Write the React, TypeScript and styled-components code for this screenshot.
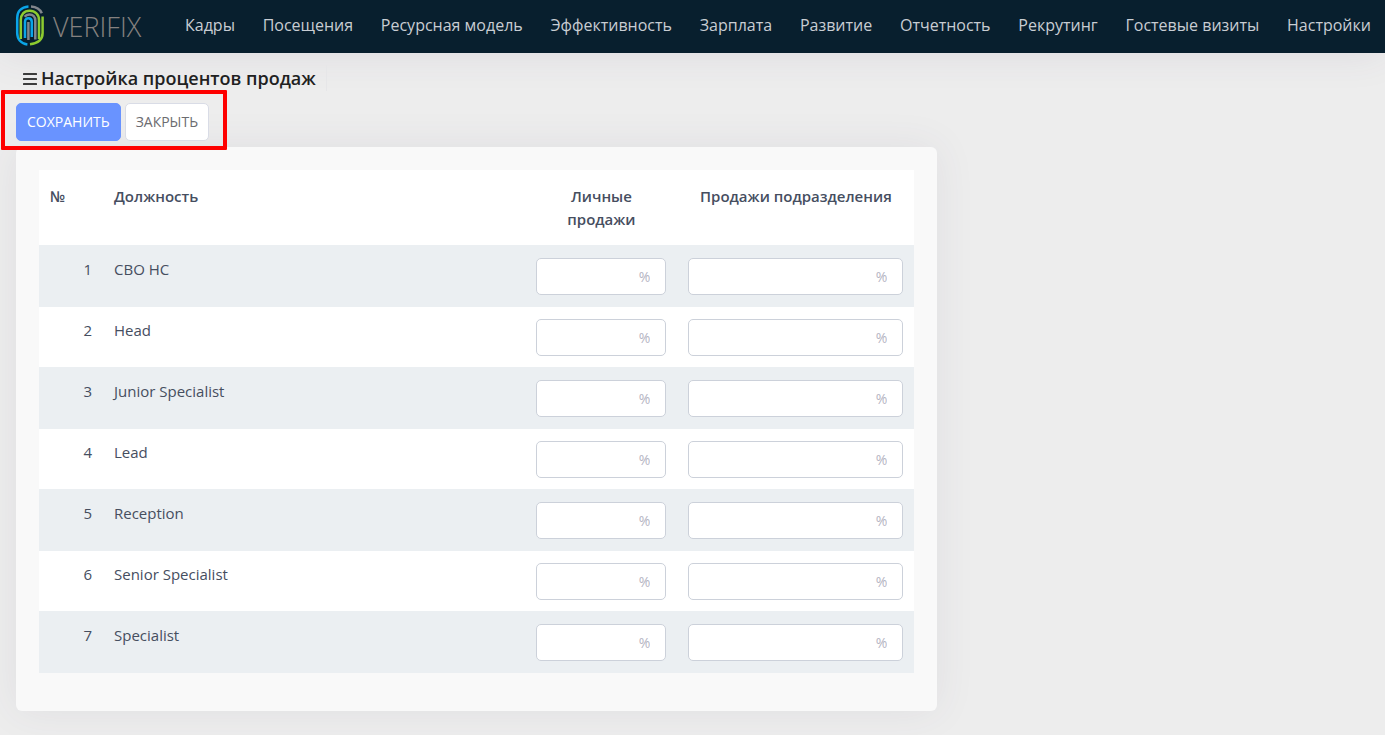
import React from 'react';
import styled, { createGlobalStyle, css } from 'styled-components';

const GlobalStyle = createGlobalStyle`
  *, *::before, *::after { box-sizing: border-box; }
  body {
    margin: 0;
    background: #ededed;
    color: #464e5f;
    font-family: "Open Sans", "Noto Sans", sans-serif;
    font-size: 15px;
    line-height: 23px;
  }
  #root { min-height: 100vh; }
`;

const Header = styled.header`
  display: flex;
  align-items: center;
  height: 53px;
  padding: 0 14px 0 15px;
  background: #081f2e;
  box-shadow: 0 0 40px rgba(82, 63, 105, 0.1);
`;

const Brand = styled.a`
  display: flex;
  flex: none;
  margin-right: 36px;
  padding-bottom: 2px;
  svg { display: block; }
`;

const Nav = styled.nav`
  display: flex;
  flex: 1;
  justify-content: space-between;
  padding-bottom: 3px;
`;

const NavLink = styled.a`
  color: #c8cdd3;
  font-size: 16px;
  line-height: 24px;
  text-decoration: none;
  white-space: nowrap;
  &:hover { color: #fff; }
`;

const Page = styled.main`
  padding: 12px 14px 24px 16px;
`;

const TitleBar = styled.div`
  display: flex;
  align-items: center;
  gap: 4px;
  width: fit-content;
  height: 26px;
  padding: 0 10px 0 7px;
  border-right: 1px solid #e6e6e8;
`;

const MenuButton = styled.button`
  display: flex;
  padding: 2px 0 0;
  border: 0;
  background: none;
  color: #3c3c3c;
  cursor: pointer;
`;

const Title = styled.h1`
  margin: 0;
  color: #212121;
  font-size: 18px;
  font-weight: 600;
  line-height: 26px;
`;

const Toolbar = styled.div`
  position: relative;
  display: flex;
  gap: 4px;
  width: fit-content;
  padding: 12px 0 6px;
`;

const Highlight = styled.div`
  position: absolute;
  inset: -1px -18px -3px -15px;
  border: 4px solid #fe0000;
  border-radius: 1px;
  pointer-events: none;
`;

const Button = styled.button<{ $primary?: boolean }>`
  height: 38px;
  padding: 0 10px;
  border: 1px solid #d9dce6;
  border-radius: 5px;
  background: #fff;
  color: #6c6c70;
  font-family: inherit;
  font-size: 14px;
  line-height: 20px;
  cursor: pointer;
  ${(p) =>
    p.$primary &&
    css`
      border-color: #6993ff;
      background: #6993ff;
      color: #fff;
    `}
`;

const Card = styled.section`
  width: 68%;
  padding: 23px 23px 38px;
  border-radius: 6px;
  background: #f9f9f9;
  box-shadow: 0 0 40px rgba(82, 63, 105, 0.08);
`;

const Table = styled.table`
  width: 100%;
  border-collapse: collapse;
  table-layout: fixed;
  background: #fff;
`;

const Column = styled.col<{ $width?: number }>`
  width: ${(p) => (p.$width ? `${p.$width}px` : 'auto')};
`;

const HeadCell = styled.th<{ $center?: boolean }>`
  padding: 15px 11px 14px;
  font-weight: 600;
  text-align: ${(p) => (p.$center ? 'center' : 'left')};
  vertical-align: top;
`;

const Cell = styled.td<{ $right?: boolean }>`
  padding: 12px 11px 11px;
  text-align: ${(p) => (p.$right ? 'right' : 'left')};
  vertical-align: top;
`;

const Row = styled.tr`
  &:nth-child(odd) { background: #ebeff2; }
  &:nth-child(odd) > ${Cell} { padding: 13px 11px 12px; }
`;

const PercentInput = styled.input`
  display: block;
  width: 100%;
  height: 37px;
  padding: 0 15px;
  border: 1px solid #ccd1da;
  border-radius: 5px;
  background: #fff;
  color: #464e5f;
  font-family: inherit;
  font-size: 14px;
  text-align: right;
  &::placeholder { color: #b5b5c3; opacity: 1; }
`;

const links = [
  'Кадры', 'Посещения', 'Ресурсная модель', 'Эффективность', 'Зарплата',
  'Развитие', 'Отчетность', 'Рекрутинг', 'Гостевые визиты', 'Настройки',
];

const positions = [
  'СВО НС', 'Head', 'Junior Specialist', 'Lead', 'Reception', 'Senior Specialist', 'Specialist',
];

function Logo() {
  return (
    <svg width="134" height="42" viewBox="0 0 134 42" role="img" aria-label="Verifix">
      <g fill="none" strokeWidth="2.5">
        <g stroke="#0aa5e8">
          <path d="M13.5 1.4C6 2 2.2 7 2.2 13V28C2.2 34 6 38.6 12.4 39.4" />
          <path d="M10 33V17C10 14.6 11.4 13.2 13.4 13.2S16.8 14.6 16.8 17V32" />
        </g>
        <g stroke="#8ccb2f">
          <path d="M5.8 34V15C5.8 9.5 9 5.8 14.6 5.8S24 9.5 24 15V34" />
          <path d="M27.6 11.5V28C27.6 34 23.5 38.2 15 39.2" />
        </g>
        <g stroke="#82868c">
          <path d="M16 1.4C21 1.7 25 4 26.8 8.2" />
          <path d="M9.6 11.8C10.8 10.2 12.4 9.5 14.4 9.5C18 9.5 20.3 12 20.3 15.5V34.5" />
          <path d="M13.4 17V35" />
        </g>
      </g>
      <text x="38" y="32" fill="#85817f" fontFamily="Open Sans, sans-serif" fontWeight="300" fontSize="27">VERIFIX</text>
    </svg>
  );
}

export default function App() {
  return (
    <>
      <GlobalStyle />
      <Header>
        <Brand href="#"><Logo /></Brand>
        <Nav>
          {links.map((label) => <NavLink key={label} href="#">{label}</NavLink>)}
        </Nav>
      </Header>
      <Page>
        <TitleBar>
          <MenuButton type="button" aria-label="Меню">
            <svg width="14" height="12" viewBox="0 0 14 12" fill="currentColor">
              <rect y="0" width="14" height="2" rx="0.5" />
              <rect y="5" width="14" height="2" rx="0.5" />
              <rect y="10" width="14" height="2" rx="0.5" />
            </svg>
          </MenuButton>
          <Title>Настройка процентов продаж</Title>
        </TitleBar>
        <Toolbar>
          <Button type="button" $primary>СОХРАНИТЬ</Button>
          <Button type="button">ЗАКРЫТЬ</Button>
          <Highlight />
        </Toolbar>
        <Card>
          <Table>
            <colgroup>
              <Column $width={64} />
              <Column />
              <Column $width={152} />
              <Column $width={237} />
            </colgroup>
            <thead>
              <tr>
                <HeadCell scope="col">№</HeadCell>
                <HeadCell scope="col">Должность</HeadCell>
                <HeadCell scope="col" $center>Личные продажи</HeadCell>
                <HeadCell scope="col" $center>Продажи подразделения</HeadCell>
              </tr>
            </thead>
            <tbody>
              {positions.map((name, i) => (
                <Row key={name}>
                  <Cell $right>{i + 1}</Cell>
                  <Cell>{name}</Cell>
                  <Cell><PercentInput placeholder="%" aria-label={`Личные продажи, ${name}`} /></Cell>
                  <Cell><PercentInput placeholder="%" aria-label={`Продажи подразделения, ${name}`} /></Cell>
                </Row>
              ))}
            </tbody>
          </Table>
        </Card>
      </Page>
    </>
  );
}
